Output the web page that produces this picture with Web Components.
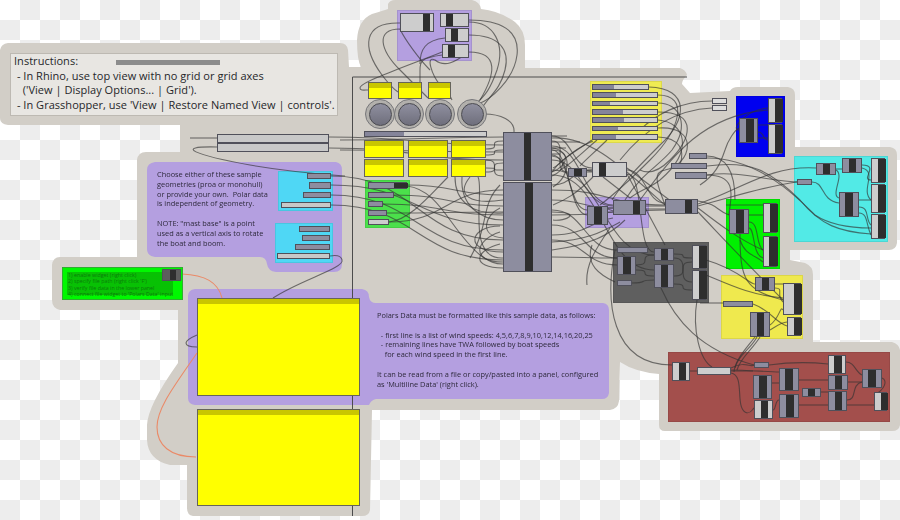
<!DOCTYPE html>
<html>
<head>
<meta charset="utf-8">
<style>
    html, body { margin: 0; padding: 0; overflow: hidden; }
</style>
</head>
<body>

<gh-canvas>
    <gh-hull></gh-hull>

    <gh-group at="397 10 75 51" color="#b49fe0"></gh-group>
    <gh-group at="590 81 72 62" color="#efeb52"></gh-group>
    <gh-group at="365 180 45 48" color="#4be04b"></gh-group>
    <gh-group at="585 197 64 31" color="#b49fe0"></gh-group>
    <gh-group at="736 96 49 61" color="#0000f0"></gh-group>
    <gh-group at="794 156 94 86" color="#52eae6"></gh-group>
    <gh-group at="726 199 54 70" color="#00f000"></gh-group>
    <gh-group at="613 242 96 61" color="#5f5f5f"></gh-group>
    <gh-group at="721 275 82 64" color="#efe94e"></gh-group>
    <gh-group at="668 352 222 70" color="#a34f4c"></gh-group>
    <gh-group at="278 171 55 40" color="#4fd7f5"></gh-group>
    <gh-group at="275 223 58 40" color="#4fd7f5"></gh-group>

    <gh-wires></gh-wires>

    <gh-note at="10 53 328 63" kind="plain">Instructions:
 - In Rhino, use top view with no grid or grid axes
   ('View | Display Options... | Grid').
 - In Grasshopper, use 'View | Restore Named View | controls'.</gh-note>
    <gh-node at="116 60 104 5" tone="#8c8c8c" flat></gh-node>

    <gh-note at="157 170 118 84" kind="small">Choose either of these sample
geometries (proa or monohull)
or provide your own.  Polar data
is independent of geometry.

NOTE: "mast base" is a point
used as a vertical axis to rotate
the boat and boom.</gh-note>

    <gh-note at="377 311 230 84" kind="small">Polars Data must be formatted like this sample data, as follows:

  - first line is a list of wind speeds: 4,5,6,7,8,9,10,12,14,16,20,25
  - remaining lines have TWA followed by boat speeds
    for each wind speed in the first line.

It can be read from a file or copy/pasted into a panel, configured
as 'Multiline Data' (right click).</gh-note>

    <gh-note at="62 267 121 33" kind="alert">1) enable widget (right click)
2) specify file path (right click 'F')
3) verify file data in the lower panel
4) connect file widget to 'Polars Data' input</gh-note>
    <gh-node at="162 269 19 12" tone="#5d5d5d" core="7 6"></gh-node>

    <gh-node at="217 134 112 9" tone="#c8c8c8"></gh-node>
    <gh-node at="217 143 112 9" tone="#c8c8c8"></gh-node>

    <gh-node at="307 173 24 6"></gh-node>
    <gh-node at="309 182 22 7"></gh-node>
    <gh-node at="303 192 28 6"></gh-node>
    <gh-node at="281 202 50 6" tone="#c8c8c8"></gh-node>
    <gh-node at="299 226 31 6"></gh-node>
    <gh-node at="302 235 28 6"></gh-node>
    <gh-node at="295 244 35 6"></gh-node>
    <gh-node at="277 253 53 6" tone="#c8c8c8"></gh-node>

    <gh-panel at="197 298 163 98"></gh-panel>
    <gh-panel at="197 409 163 97"></gh-panel>

    <!-- top purple group -->
    <gh-node at="400 13 34 19" tone="#cdcdcd" core="22 7"></gh-node>
    <gh-node at="440 13 29 14" tone="#cdcdcd" core="5 7"></gh-node>
    <gh-node at="445 28 24 14" tone="#cdcdcd" core="5 7"></gh-node>
    <gh-node at="442 44 27 14" tone="#cdcdcd" core="5 7"></gh-node>

    <!-- controls -->
    <gh-panel at="368 82 24 17"></gh-panel>
    <gh-panel at="398 82 24 17"></gh-panel>
    <gh-panel at="428 82 23 17"></gh-panel>
    <gh-knob at="380 114"></gh-knob>
    <gh-knob at="409 114"></gh-knob>
    <gh-knob at="440 114"></gh-knob>
    <gh-knob at="472 114"></gh-knob>
    <gh-node at="364 131 123 6" tone="#cdcdcd" core="0 39" coretone="#85859a"></gh-node>
    <gh-panel at="364 140 40 18"></gh-panel>
    <gh-panel at="408 140 40 18"></gh-panel>
    <gh-panel at="451 140 35 18"></gh-panel>
    <gh-panel at="364 159 40 18"></gh-panel>
    <gh-panel at="408 159 40 18"></gh-panel>
    <gh-panel at="451 159 35 18"></gh-panel>

    <gh-node at="368 182 39 7" core="25 14"></gh-node>
    <gh-node at="368 192 26 6"></gh-node>
    <gh-node at="368 201 15 6"></gh-node>
    <gh-node at="368 210 19 6"></gh-node>
    <gh-node at="368 219 21 6" tone="#cdcdcd"></gh-node>

    <!-- central block -->
    <gh-node at="503 132 49 49" core="20 7"></gh-node>
    <gh-node at="503 182 49 90" core="21 8"></gh-node>
    <gh-node at="568 168 19 9" core="5 8"></gh-node>
    <gh-node at="592 162 35 15" tone="#cdcdcd" core="6 7"></gh-node>
    <gh-node at="587 206 21 19" core="6 8"></gh-node>
    <gh-node at="613 200 33 15" core="19 7"></gh-node>
    <gh-node at="665 199 33 15" core="19 7"></gh-node>

    <!-- yellow list -->
    <gh-node at="592 84 57 6" tone="#cdcdcd" core="0 21" coretone="#85859a"></gh-node>
    <gh-node at="592 92 66 6" tone="#cdcdcd" core="0 23" coretone="#85859a"></gh-node>
    <gh-node at="592 101 66 5" tone="#cdcdcd" core="0 17" coretone="#85859a"></gh-node>
    <gh-node at="592 109 66 6" tone="#cdcdcd" core="0 30" coretone="#85859a"></gh-node>
    <gh-node at="592 117 66 6" tone="#cdcdcd" core="0 31" coretone="#85859a"></gh-node>
    <gh-node at="592 126 66 5" tone="#cdcdcd" core="0 25" coretone="#85859a"></gh-node>
    <gh-node at="592 134 66 6" tone="#cdcdcd" core="0 23" coretone="#85859a"></gh-node>

    <gh-node at="712 98 15 6" tone="#dcdcdc"></gh-node>
    <gh-node at="712 105 15 6" tone="#dcdcdc"></gh-node>
    <gh-node at="689 153 18 6"></gh-node>
    <gh-node at="671 163 36 6"></gh-node>
    <gh-node at="675 172 32 7"></gh-node>

    <!-- blue -->
    <gh-node at="768 98 14 25" tone="#cdcdcd" core="6 8"></gh-node>
    <gh-node at="768 124 14 30" tone="#cdcdcd" core="6 8"></gh-node>
    <gh-node at="739 118 19 25" core="6 8"></gh-node>

    <!-- cyan -->
    <gh-node at="816 163 20 12" core="6 7"></gh-node>
    <gh-node at="842 158 20 15" core="6 7"></gh-node>
    <gh-node at="797 179 15 6"></gh-node>
    <gh-node at="839 192 20 25" core="5 8"></gh-node>
    <gh-node at="871 158 14 25" tone="#cdcdcd" core="6 8"></gh-node>
    <gh-node at="871 184 14 29" tone="#cdcdcd" core="6 8"></gh-node>
    <gh-node at="871 214 14 25" tone="#cdcdcd" core="6 8"></gh-node>

    <!-- green -->
    <gh-node at="729 209 20 25" core="6 8"></gh-node>
    <gh-node at="763 203 14 30" tone="#cdcdcd" core="6 8"></gh-node>
    <gh-node at="763 236 14 31" tone="#cdcdcd" core="5 9"></gh-node>

    <!-- dark -->
    <gh-node at="617 247 31 6"></gh-node>
    <gh-node at="617 256 19 19" core="5 8"></gh-node>
    <gh-node at="617 280 15 6"></gh-node>
    <gh-node at="654 248 20 13" core="6 7"></gh-node>
    <gh-node at="654 264 20 24" core="6 7"></gh-node>
    <gh-node at="692 245 14 24" tone="#cdcdcd" core="6 8"></gh-node>
    <gh-node at="692 270 14 30" tone="#cdcdcd" core="6 8"></gh-node>

    <!-- yellow -->
    <gh-node at="755 277 20 14" core="6 7"></gh-node>
    <gh-node at="723 301 30 6"></gh-node>
    <gh-node at="750 312 20 25" core="6 7"></gh-node>
    <gh-node at="783 283 18 32" tone="#cdcdcd" core="10 8"></gh-node>
    <gh-node at="787 317 14 19" tone="#cdcdcd" core="6 8"></gh-node>

    <!-- red -->
    <gh-node at="672 362 18 19" tone="#cdcdcd" core="6 7"></gh-node>
    <gh-node at="697 367 34 8" tone="#cdcdcd"></gh-node>
    <gh-node at="754 362 15 6"></gh-node>
    <gh-node at="753 375 19 24" core="5 8"></gh-node>
    <gh-node at="754 400 19 19" tone="#cdcdcd" core="6 7"></gh-node>
    <gh-node at="779 368 20 23" core="5 8"></gh-node>
    <gh-node at="779 394 20 24" core="6 8"></gh-node>
    <gh-node at="802 388 19 9" core="5 7"></gh-node>
    <gh-node at="828 355 18 19" tone="#cdcdcd" core="5 8"></gh-node>
    <gh-node at="828 375 20 15" core="6 7"></gh-node>
    <gh-node at="828 391 19 20" core="6 7"></gh-node>
    <gh-node at="862 369 20 19" core="5 8"></gh-node>
    <gh-node at="874 392 13 19" tone="#cdcdcd" core="6 7"></gh-node>
</gh-canvas>

<script>

    // [x1, y1, x2, y2] is a grasshopper style wire, a string is a free path
    const WIRES = [
        // top group
        'M400 23C362 22 362 48 382 75C388 83 392 88 398 92',
        'M400 29C375 29 380 50 400 70C410 80 420 90 428 98',
        'M469 20C500 20 520 30 517 55C514 80 490 100 478 104',
        'M469 35C500 35 510 50 505 70C500 90 490 95 482 108',
        'M469 52C500 52 495 75 480 100',
        'M469 22C495 22 505 45 497 70C490 90 485 95 478 102',
        'M442 52C410 65 360 82 360 88C360 91 365 90 368 90',
        'M442 55C420 58 420 62 420 70L420 98',
        'M445 38C425 40 420 50 420 64',
        'M469 52C455 62 445 68 435 60C425 55 432 75 440 85C445 90 450 95 452 100',
        'M484 114C500 114 515 120 514 132',
        'M430 70C420 60 405 40 400 29',
        // left side
        'M190 138H217',
        'M217 147C172 146 195 155 250 165C290 172 320 174 345 176',
        'M273 298C300 280 345 268 342 260C341 255 335 255 330 256',
        'M197 335C190 338 186 341 186 343C186 346 192 347 197 347',
        // sliders and notes to the central block
        [329, 137, 503, 145], [329, 148, 503, 160],
        [331, 176, 503, 240], [331, 185, 503, 225],
        [331, 195, 503, 250], [331, 205, 503, 260],
        [340, 140, 503, 137], [340, 150, 503, 152],
        [486, 149, 503, 141], [486, 155, 503, 150], [486, 168, 503, 170],
        [486, 160, 503, 176], [486, 172, 503, 163],
        [407, 185, 503, 195], [394, 195, 503, 206], [383, 204, 503, 215],
        [387, 213, 503, 212], [389, 222, 503, 190],
        'M407 186C440 190 450 230 480 255C490 262 495 264 503 264',
        'M455 177C455 200 470 215 503 213',
        'M462 177C460 205 480 220 503 220',
        'M448 177C430 195 410 220 389 222',
        'M503 200C470 205 455 195 470 177',
        'M503 262C470 262 475 240 500 232',
        'M503 252C462 252 470 226 500 226',
        'M503 268C470 268 475 250 500 244',
        'M503 238C478 236 485 215 500 208',
        'M503 258C465 260 485 190 478 177',
        'M470 258C490 225 480 205 500 185',
        // central block to the right
        'M552 136H567', 'M552 142H580', 'M552 148H566', 'M552 154H560',
        'M552 148C572 150 572 175 553 187',
        'M552 150C570 150 570 165 552 172',
        'M552 156C566 158 566 170 552 176',
        'M552 138C590 136 620 165 665 205',
        'M593 141C570 150 560 165 553 168',
        'M593 177C575 195 565 200 553 205',
        'M603 177L630 198',
        'M627 168L680 208',
        'M627 174L665 245',
        'M552 235C585 235 590 222 613 218',
        'M552 242C590 240 605 230 620 222',
        'M552 250C590 245 610 235 625 220',
        'M592 245C585 265 600 275 615 282',
        'M610 228C595 250 585 265 587 285',
        'M552 212C585 212 565 222 553 220',
        [552, 136, 592, 168], [552, 141, 568, 172], [552, 146, 613, 205],
        [552, 150, 587, 215], [552, 155, 587, 210], [552, 160, 613, 206],
        [552, 190, 665, 205], [552, 200, 613, 208], [552, 210, 617, 250],
        [552, 225, 617, 258], [552, 240, 617, 265], [552, 257, 617, 258],
        [552, 170, 654, 255], [552, 175, 654, 270], [552, 185, 592, 170],
        [552, 215, 665, 210], [587, 172, 592, 170],
        [627, 170, 665, 203], [627, 174, 654, 252], [608, 212, 613, 208],
        [646, 206, 665, 206], [646, 209, 665, 209],
        // yellow list
        'M649 87C690 88 688 120 660 145C640 165 625 180 612 200',
        'M658 95C690 95 680 130 650 160C635 175 620 190 600 205',
        'M658 103C680 103 690 125 672 150C660 165 640 175 625 200',
        'M658 112C700 112 690 140 670 160C660 170 650 175 640 170',
        'M658 120C685 122 695 150 660 180C650 188 640 190 630 198',
        'M658 128C700 125 692 165 665 170C650 172 660 190 665 205',
        'M658 137C680 138 685 150 680 165',
        'M592 140C570 155 560 160 552 172',
        'M597 140C585 150 570 165 560 170',
        'M607 140C595 152 585 160 580 166',
        // long arcs to the right
        'M712 101C680 101 655 115 640 130',
        'M712 108C670 110 640 135 620 160',
        'M640 200C670 160 700 115 768 110',
        'M707 156C725 156 735 170 735 200',
        'M707 166C750 160 770 170 800 200C820 225 840 232 871 234',
        'M707 158C760 158 800 200 815 215C830 225 850 228 871 228',
        'M707 175C740 175 730 200 729 215',
        'M698 204C740 190 770 165 816 168',
        'M698 206C740 195 770 185 797 182',
        'M707 175C740 170 770 182 800 182',
        'M698 201C720 205 715 210 729 215',
        'M698 208C720 225 740 240 763 250',
        'M698 212C720 235 745 262 783 300',
        'M700 185C715 175 720 165 725 150C728 140 735 130 739 128',
        // blue
        'M739 130C730 130 745 110 768 108',
        'M758 125H768', 'M758 132C765 132 762 140 768 140', 'M758 138H768',
        // cyan
        'M812 182C825 182 820 200 839 203',
        'M836 169H842',
        'M862 165C880 165 860 180 871 180',
        'M859 200H871',
        'M859 207C870 207 865 220 871 225',
        'M859 213C868 213 866 225 871 235',
        'M836 170C845 175 830 195 839 198',
        'M862 168C878 172 860 190 871 200',
        // green
        'M726 205H763',
        'M749 215H763',
        'M749 222C760 222 755 245 763 250',
        'M749 228C755 228 752 255 763 258',
        'M740 240C745 255 755 255 763 262',
        'M740 234C740 280 745 290 783 300',
        // dark group
        [636, 265, 654, 255], [636, 270, 654, 276], [632, 283, 654, 280],
        [674, 254, 692, 258], [674, 258, 692, 282], [674, 276, 692, 262], [674, 284, 692, 290],
        'M706 260C740 270 750 285 755 284',
        'M706 275C730 285 750 295 783 298',
        'M700 303H723',
        // yellow
        'M775 284H783', 'M775 288C785 288 775 295 783 302',
        'M753 304C770 310 775 322 787 326',
        'M770 325C780 318 780 305 783 310',
        'M770 330C778 325 782 322 787 322',
        'M757 337C750 350 738 355 735 368',
        'M760 337C752 350 740 358 737 370',
        'M755 337C745 350 735 360 734 372',
        // into the red group
        'M661 288C675 320 700 350 754 365',
        'M697 300C692 330 700 360 712 367',
        'M615 250C605 300 610 365 672 365',
        'M731 371H753', 'M690 371H697',
        'M731 373C745 375 735 405 745 412C750 415 752 410 754 408',
        'M769 365C790 362 810 362 828 364',
        'M731 368C745 360 750 368 754 365',
        'M772 383H779', 'M799 380H828', 'M799 405H828', 'M821 392H828',
        'M848 382H862', 'M846 362C855 362 855 372 862 375',
        'M847 400C858 400 850 385 862 382', 'M847 405H874',
        'M882 378C888 380 885 390 874 395',
        'M773 410C776 410 775 400 779 400',
        'M731 370C745 370 770 372 779 372'
    ];

    const ORANGE = [
        'M182 274C205 275 218 282 222 298',
        'M197 353C175 385 157 408 157 427C157 445 170 457 196 457'
    ];

    // reads at="x y w h" and places the host on the free canvas
    function place(el) {
        let [x, y, w, h] = el.getAttribute('at').split(' ').map(Number);
        el.style.left = x + 'px';
        el.style.top = y + 'px';
        if (w !== undefined) {
            el.style.width = w + 'px';
            el.style.height = h + 'px';
        }
    }

    window.customElements.define('gh-canvas', class extends HTMLElement {
        constructor() {
            super();
            this.attachShadow({mode: 'open'}).innerHTML = `
                <style>
                    :host {
                        display: block;
                        position: relative;
                        width: 900px;
                        height: 520px;
                        overflow: hidden;
                        background: repeating-conic-gradient(#ededed 0 25%, #fff 0 50%) 0 0 / 40px 40px;
                        filter: blur(.35px);
                    }
                </style>
                <slot></slot>`;
        }
    });

    window.customElements.define('gh-hull', class extends HTMLElement {
        constructor() {
            super();
            this.attachShadow({mode: 'open'}).innerHTML = `
                <style>
                    :host { position: absolute; left: 0; top: 0; width: 900px; height: 520px; }
                    svg { display: block; }
                </style>
                <svg width="900" height="520" viewBox="0 0 900 520">
                    <path fill="#d2cec7" d="M8 43L340 43Q347 43 348 50L349 67L361 67Q357 60 357 40Q358 20 372 14Q385 10 388 9L388 4Q390 0 395 0L472 0Q480 2 481 9Q500 11 515 22Q525 30 525 45L525 68L680 68Q686 70 687 75Q682 80 682 84L690 93L730 91Q732 87 738 87L788 87Q795 88 795 95L795 147L890 147Q897 148 897 155L897 243Q896 250 889 250L790 250L790 260L805 263Q813 266 813 275L813 342L892 342Q899 344 900 350L900 425Q899 431 892 431L665 431Q659 431 659 425L659 374Q635 372 620 362L619 401Q618 409 610 410L372 410L370 510Q369 516 362 516L193 516Q187 515 187 508L187 465L170 465Q148 460 147 440L147 425Q148 405 178 363L178 310L60 310Q52 308 52 300L52 265Q53 257 60 257L137 257L137 160Q138 152 146 152L180 152L180 125L8 125Q0 124 0 118L0 50Q1 44 8 43Z"/>
                    <path fill="#b49fe0" d="M155 162L336 162Q342 163 342 170L342 264Q342 272 334 272L276 272Q268 271 267 264Q266 257 260 257L155 257Q147 256 147 249L147 170Q147 163 155 162Z"/>
                    <path fill="#b49fe0" d="M195 289L362 289Q369 290 369 297Q370 303 376 303L603 303Q609 304 609 310L609 393Q608 399 602 399L376 399Q371 400 369 405L195 405Q188 404 188 398L188 296Q188 290 195 289Z"/>
                    <path fill="none" stroke="#4c4c4c" d="M687 77H352.5V516"/>
                </svg>`;
        }
    });

    window.customElements.define('gh-group', class extends HTMLElement {
        constructor() {
            super();
            this.attachShadow({mode: 'open'}).innerHTML = `
                <style>
                    :host { position: absolute; display: block; box-sizing: border-box; border: 1px solid rgba(0,0,0,.08); }
                </style>`;
        }
        connectedCallback() {
            place(this);
            this.style.background = this.getAttribute('color');
        }
    });

    window.customElements.define('gh-wires', class extends HTMLElement {
        constructor() {
            super();
            let d = WIRES.map(w => {
                if (typeof w === 'string') return w;
                let [x1, y1, x2, y2] = w;
                let t = Math.max(18, Math.abs(x2 - x1) * 0.5);
                return `M${x1} ${y1}C${x1 + t} ${y1} ${x2 - t} ${y2} ${x2} ${y2}`;
            });
            this.attachShadow({mode: 'open'}).innerHTML = `
                <style>
                    :host { position: absolute; left: 0; top: 0; width: 900px; height: 520px; }
                    svg { display: block; }
                    path { fill: none; stroke-width: 1.1; }
                </style>
                <svg width="900" height="520" viewBox="0 0 900 520">
                    ${d.map(p => `<path d="${p}" stroke="#333" stroke-opacity=".65"/>`).join('')}
                    ${ORANGE.map(p => `<path d="${p}" stroke="#ea8a68"/>`).join('')}
                </svg>`;
        }
    });

    // grey box with an optional dark core, core="offset width"
    window.customElements.define('gh-node', class extends HTMLElement {
        constructor() {
            super();
            this.attachShadow({mode: 'open'}).innerHTML = `
                <style>
                    :host {
                        position: absolute;
                        display: flex;
                        box-sizing: border-box;
                        border: 1px solid #50505a;
                        background: #8d8d9f;
                    }
                    :host([flat]) { border: 0; }
                    .pad { flex: none; }
                    .core { flex: none; background: #2e2e2e; }
                </style>
                <div class="pad"></div><div class="core"></div>`;
        }
        connectedCallback() {
            place(this);
            if (this.hasAttribute('tone')) this.style.background = this.getAttribute('tone');
            if (this.hasAttribute('core')) {
                let [off, w] = this.getAttribute('core').split(' ');
                this.shadowRoot.querySelector('.pad').style.width = off + 'px';
                let core = this.shadowRoot.querySelector('.core');
                core.style.width = w + 'px';
                if (this.hasAttribute('coretone')) core.style.background = this.getAttribute('coretone');
            }
        }
    });

    window.customElements.define('gh-panel', class extends HTMLElement {
        constructor() {
            super();
            this.attachShadow({mode: 'open'}).innerHTML = `
                <style>
                    :host {
                        position: absolute;
                        display: flex;
                        flex-direction: column;
                        box-sizing: border-box;
                        border: 1px solid #66645a;
                        background: #ffff00;
                    }
                    .head { flex: none; height: 5px; background: #c9c600; }
                </style>
                <div class="head"></div>`;
        }
        connectedCallback() { place(this); }
    });

    window.customElements.define('gh-knob', class extends HTMLElement {
        constructor() {
            super();
            this.attachShadow({mode: 'open'}).innerHTML = `
                <style>
                    :host {
                        position: absolute;
                        display: flex;
                        align-items: center;
                        justify-content: center;
                        box-sizing: border-box;
                        width: 30px;
                        height: 30px;
                        margin: -15px 0 0 -15px;
                        border-radius: 50%;
                        border: 1px solid #77777a;
                        background: #b2b0ac;
                    }
                    div {
                        box-sizing: border-box;
                        width: 23px;
                        height: 23px;
                        border-radius: 50%;
                        border: 1.5px solid #4a4a50;
                        background: linear-gradient(#8f8f9f, #6f6f7c);
                    }
                </style>
                <div></div>`;
        }
        connectedCallback() { place(this); }
    });

    window.customElements.define('gh-note', class extends HTMLElement {
        constructor() {
            super();
            this.attachShadow({mode: 'open'}).innerHTML = `
                <style>
                    :host {
                        position: absolute;
                        display: block;
                        box-sizing: border-box;
                        font-family: "Open Sans", "DejaVu Sans", sans-serif;
                    }
                    slot { white-space: pre; }
                    :host([kind="plain"]) {
                        background: #e8e6e2;
                        border: 1px solid #bdb9b2;
                        padding: 0 0 0 3px;
                        color: #26262a;
                        font-size: 11px;
                        line-height: 14.7px;
                        letter-spacing: .03px;
                    }
                    :host([kind="small"]) {
                        color: #2e2a3c;
                        font-size: 7.4px;
                        line-height: 9.8px;
                    }
                    :host([kind="alert"]) {
                        background: linear-gradient(rgba(20, 110, 10, .4), rgba(20, 110, 10, .4)) 4px 4px / 106px 23px no-repeat, #00f800;
                        border: 1px solid #2fae2f;
                        color: #0b7a0b;
                        font-size: 5.3px;
                        line-height: 6.3px;
                        padding: 4px 0 0 5px;
                    }
                </style>
                <slot></slot>`;
        }
        connectedCallback() { place(this); }
    });

</script>
</body>
</html>
